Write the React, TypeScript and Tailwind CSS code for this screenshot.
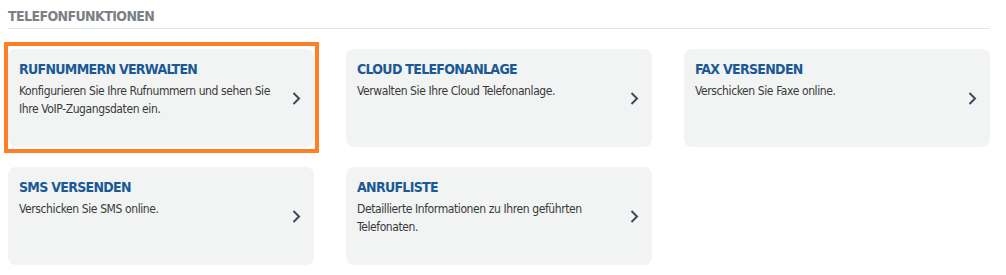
import React from "react";

interface Feature {
  title: string;
  text: string;
  active?: boolean;
}

const features: Feature[] = [
  { title: "RUFNUMMERN VERWALTEN", text: "Konfigurieren Sie Ihre Rufnummern und sehen Sie Ihre VoIP-Zugangsdaten ein.", active: true },
  { title: "CLOUD TELEFONANLAGE", text: "Verwalten Sie Ihre Cloud Telefonanlage." },
  { title: "FAX VERSENDEN", text: "Verschicken Sie Faxe online." },
  { title: "SMS VERSENDEN", text: "Verschicken Sie SMS online." },
  { title: "ANRUFLISTE", text: "Detaillierte Informationen zu Ihren geführten Telefonaten." },
];

const Chevron = () => (
  <svg width="9" height="13" viewBox="0 0 9 13" fill="none" className="shrink-0">
    <polyline points="1.5,1 7,6.5 1.5,12" stroke="#3d4858" strokeWidth="2" />
  </svg>
);

const FeatureCard: React.FC<{ item: Feature }> = ({ item }) => (
  <a href="#!" className="relative flex h-[98px] items-center rounded-lg bg-[#f2f3f3] pl-[11px] pr-[13px]">
    {/* focus highlight */}
    {item.active && (
      <span className="pointer-events-none absolute -top-[7px] -right-[5px] -bottom-[6px] -left-[4px] border-4 border-[#ff7f27]" />
    )}
    <div className="flex h-full flex-1 flex-col pt-[10px] pr-4">
      <h3 className="text-[14px] leading-[20px] font-bold tracking-[-0.7px] text-[#1b5995]">{item.title}</h3>
      <p className="mt-[3px] text-[12px] leading-[18px] tracking-[-0.4px] text-[#3a3a3a]">{item.text}</p>
    </div>
    <Chevron />
  </a>
);

export default function App() {
  return (
    <div className="bg-white px-2 pt-[6px] pb-2 font-['DejaVu_Sans_Condensed','DejaVu_Sans',sans-serif]" style={{ width: 1006 }}>
      <div className="mr-2 border-b border-[#e3e4e5] pb-[2px]">
        <h2 className="text-[14px] leading-[20px] font-bold tracking-[-0.6px] text-[#7b8087]">TELEFONFUNKTIONEN</h2>
      </div>
      <div className="mt-[20px] grid w-[982px] grid-cols-3 gap-x-[32px] gap-y-[20px]">
        {features.map((f) => (
          <FeatureCard key={f.title} item={f} />
        ))}
      </div>
    </div>
  );
}
